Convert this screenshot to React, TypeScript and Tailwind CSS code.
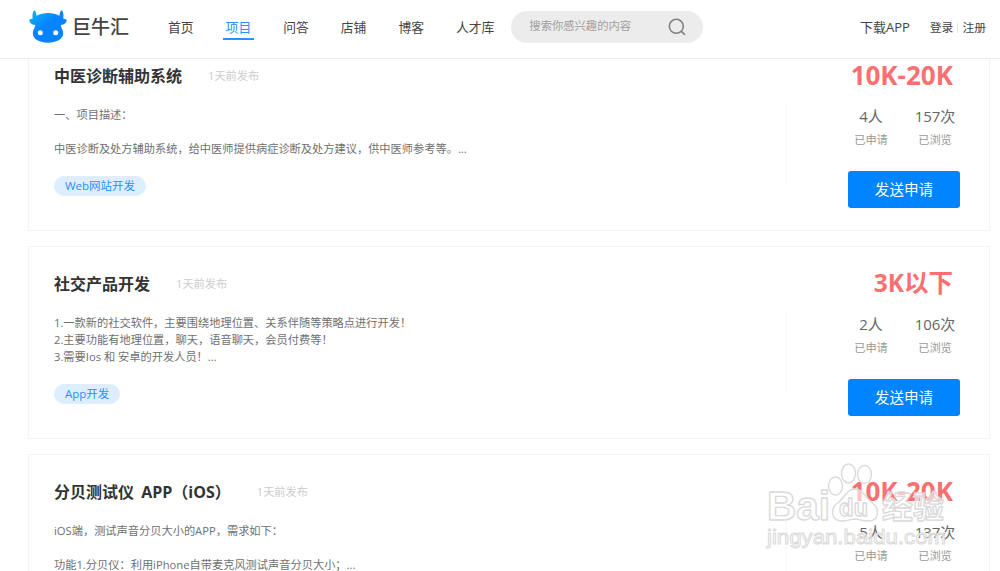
import { clsx } from "clsx";

type Project = {
  title: string;
  desc: string;
  tag: string;
  price: string;
  applied: number;
  viewed: number;
};

const navItems = ["首页", "项目", "问答", "店铺", "博客", "人才库"];

const projects: Project[] = [
  {
    title: "中医诊断辅助系统",
    desc: "一、项目描述：\n\n中医诊断及处方辅助系统，给中医师提供病症诊断及处方建议，供中医师参考等。...",
    tag: "Web网站开发",
    price: "10K-20K",
    applied: 4,
    viewed: 157,
  },
  {
    title: "社交产品开发",
    desc: "1.一款新的社交软件，主要围绕地理位置、关系伴随等策略点进行开发！\n2.主要功能有地理位置，聊天，语音聊天，会员付费等！\n3.需要Ios 和 安卓的开发人员！...",
    tag: "App开发",
    price: "3K以下",
    applied: 2,
    viewed: 106,
  },
  {
    title: "分贝测试仪 APP（iOS）",
    desc: "iOS端，测试声音分贝大小的APP，需求如下：\n\n功能1.分贝仪：利用iPhone自带麦克风测试声音分贝大小；...",
    tag: "App开发",
    price: "10K-20K",
    applied: 5,
    viewed: 137,
  },
];

function Logo() {
  return (
    <div className="flex items-center">
      <svg width="38" height="33" viewBox="0 0 38 33">
        <defs>
          <linearGradient id="cow" x1="0" y1="0" x2="0.7" y2="0.8">
            <stop offset="0" stopColor="#12b8f0" />
            <stop offset="0.6" stopColor="#0684ff" />
          </linearGradient>
        </defs>
        <path
          fill="url(#cow)"
          d="M5.5 0.3C7.2 1.2 7.2 4 7.6 5.800C11 3.8 15 2.9 19 2.9S27 3.8 30.400 5.800C30.800 4 30.800 1.200 32.500 0.300C34.300 1.500 35 5.500 34.200 8.600L37.600 9.500C37.800 12.800 35.500 14.600 31.800 15C31.700 17.500 34.200 19.500 34.200 23C34.200 29.500 27 32.700 19 32.700S3.800 29.500 3.800 23C3.800 19.500 6.300 17.500 6.200 15C2.500 14.600 0.200 12.800 0.400 9.500L3.800 8.600C3 5.500 3.700 1.500 5.500 0.300Z"
        />
        <circle cx="11.300" cy="22.800" r="2.500" fill="#fff" />
        <circle cx="26.700" cy="22.800" r="2.500" fill="#fff" />
      </svg>
      <span className="ml-[5px] pt-[2px] text-[19px] leading-none font-medium text-[#444]">巨牛汇</span>
    </div>
  );
}

function Header() {
  return (
    <header className="flex h-[59px] shrink-0 items-center border-b border-[#ececec] bg-white pr-[14px] pb-[5px] pl-[29px] text-[12.8px] text-[#444]">
      <div className="w-[139px]">
        <Logo />
      </div>
      <nav className="flex gap-[32px]">
        {navItems.map((item) => (
          <a
            key={item}
            className={clsx(
              "-mx-[3px] border-b-2 px-[3px] pt-[4px] pb-px leading-[20px]",
              item === "项目" ? "border-[#2b8fff] text-[#2b8fff]" : "border-transparent"
            )}
          >
            {item}
          </a>
        ))}
      </nav>
      <div className="ml-[17px] flex h-8 w-[192px] items-center justify-between rounded-full bg-[#ececec] pr-[17px] pl-[18px]">
        <span className="text-[11.3px] text-[#a0a0a0]">搜索你感兴趣的内容</span>
        <svg width="18" height="18" viewBox="0 0 18 18" fill="none" stroke="#808080" strokeWidth="1.6">
          <circle cx="8.300" cy="8.300" r="7" />
          <path d="M13.300 13.300L16.600 16.300" strokeLinecap="round" />
        </svg>
      </div>
      <div className="ml-auto flex items-center pt-[2px]">
        <a className="text-[13px]">下载APP</a>
        <a className="ml-5 text-[11.8px]">登录</a>
        <span className="mx-1 h-[10px] w-px bg-[#e5e5e5]" />
        <a className="text-[11.8px]">注册</a>
      </div>
    </header>
  );
}

function Stat({ value, label }: { value: string; label: string }) {
  return (
    <div className="flex w-16 flex-col items-center">
      <span className="text-[15px] leading-6 text-[#666]">{value}</span>
      <span className="text-[11.2px] leading-6 text-[#999]">{label}</span>
    </div>
  );
}

function ProjectCard({ project }: { project: Project }) {
  return (
    <article className="flex h-[193px] shrink-0 border border-[#f4f4f4] bg-white pl-[25px]">
      <div className="min-w-0 flex-1 pt-[25px]">
        <div className="flex h-6 items-center">
          <h2 className="text-[16px] font-bold text-[#333] [word-spacing:3px]">{project.title}</h2>
          <span className="ml-[26px] text-[11.2px] text-[#ccc]">1天前发布</span>
        </div>
        <p className="mt-[17.6px] h-[52.4px] text-[11.22px] leading-[17.3px] whitespace-pre-line text-[#707070]">{project.desc}</p>
        <span className="mt-[18px] inline-block h-5 rounded-full bg-[#dceeff] px-[11px] text-[11.5px] leading-5 text-[#2b8fff]">
          {project.tag}
        </span>
      </div>
      <div className="mt-[66px] h-[78px] w-px bg-[#f6f6f6]" />
      <div className="flex w-[202px] flex-col items-end pt-5 pr-[29px]">
        <div
          className={clsx(
            "pr-[7px] leading-8 font-bold text-[#fa7070]",
            project.price.includes("-") ? "text-[26px]" : "text-[24.5px]"
          )}
        >
          {project.price}
        </div>
        <div className="mt-[13px] -mr-[7px] flex">
          <Stat value={`${project.applied}人`} label="已申请" />
          <Stat value={`${project.viewed}次`} label="已浏览" />
        </div>
        <button className="mt-[19px] h-[37px] w-[112px] rounded-[3px] bg-[#0084ff] pt-px text-[14.6px] text-white">发送申请</button>
      </div>
    </article>
  );
}

function Watermark() {
  return (
    <svg
      className="pointer-events-none absolute top-[460px] left-[764px]"
      width="190"
      height="92"
      viewBox="0 0 190 92"
      fill="#fff"
      fillOpacity="0.6"
      stroke="#dadada"
      strokeWidth="1.4"
      strokeLinejoin="round"
      fontFamily='"Liberation Sans", "Noto Sans CJK SC", sans-serif'
    >
      <text x="3" y="60" fontSize="41" fontWeight="bold" textLength="63" lengthAdjust="spacingAndGlyphs">Bai</text>
      <ellipse cx="71.500" cy="26" rx="7" ry="9" />
      <ellipse cx="84.500" cy="13.500" rx="7" ry="9.500" />
      <ellipse cx="100.500" cy="14.500" rx="7" ry="9" />
      <path d="M91 29C99 29 101 37 107 42C117 49 115 61 104 61C98 61 95 59 91 59S84 61 79 61C67 61 65 49 75 42C81 37 83 29 91 29Z" />
      <text x="75" y="56" fontSize="24" fontWeight="bold" textLength="29" lengthAdjust="spacingAndGlyphs">du</text>
      <text x="118" y="58" fontSize="31" fontWeight="bold" textLength="62" lengthAdjust="spacingAndGlyphs">经验</text>
      <text x="3" y="84" fontSize="21" strokeWidth="1" textLength="179" lengthAdjust="spacingAndGlyphs">jingyan.baidu.com</text>
    </svg>
  );
}

export default function App() {
  return (
    <div className="relative flex h-[571px] w-[1000px] flex-col overflow-hidden bg-white font-['Open_Sans','Noto_Sans_CJK_SC',sans-serif]">
      <Header />
      <main className="min-h-0 flex-1 overflow-hidden pr-[10px] pl-7">
        <div className="-mt-[21px] flex flex-col gap-[15px]">
          {projects.map((project) => (
            <ProjectCard key={project.title} project={project} />
          ))}
        </div>
      </main>
      <Watermark />
    </div>
  );
}
